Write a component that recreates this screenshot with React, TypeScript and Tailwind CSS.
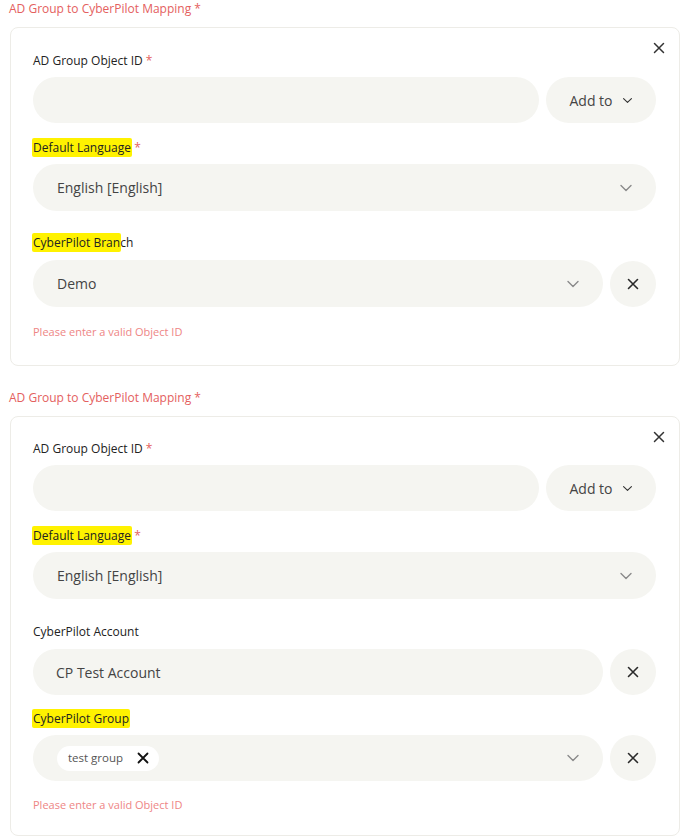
import React from 'react';

const font = { fontFamily: '"Open Sans", "Liberation Sans", sans-serif' };

const XIcon = ({ size = 12, stroke = 1.6, color = '#333' }: { size?: number; stroke?: number; color?: string }) => (
  <svg width={size} height={size} viewBox="0 0 12 12" fill="none">
    <path d="M1.5 1.5L10.5 10.5M10.5 1.5L1.5 10.5" stroke={color} strokeWidth={stroke} strokeLinecap="round" />
  </svg>
);

const Chevron = ({ size = 14, color = '#8a8a8a' }: { size?: number; color?: string }) => (
  <svg width={size} height={size} viewBox="0 0 14 14" fill="none">
    <path d="M2 4.5L7 9.5L12 4.5" stroke={color} strokeWidth={1.4} strokeLinecap="round" strokeLinejoin="round" />
  </svg>
);

const Hl = ({ children }: { children: React.ReactNode }) => (
  <span className="bg-[#fff200] rounded-[2px] -mx-[1px] px-[1px] py-[1px]">{children}</span>
);

const Label = ({ children, className = '' }: { children: React.ReactNode; className?: string }) => (
  <div className={`h-[14px] text-[12px] leading-[14px] text-[#222] ${className}`}>{children}</div>
);

const Req = () => <span className="text-[#e4605e]"> *</span>;

const SelectBox = ({ value, h = 'h-[47px]' }: { value?: React.ReactNode; h?: string }) => (
  <div className={`flex-1 ${h} rounded-full bg-[#f5f5f1] flex items-center pl-6 pr-[23px]`}>
    <div className="flex-1 text-[14px] text-[#444]">{value}</div>
    <Chevron />
  </div>
);

const ClearBtn = () => (
  <div className="w-[46px] h-[46px] rounded-full bg-[#f5f5f1] flex items-center justify-center shrink-0">
    <XIcon size={12} stroke={1.6} color="#2a2a2a" />
  </div>
);

const ObjectIdRow = () => (
  <div className="mt-[9px] h-[46px] flex gap-[7px]">
    <div className="flex-1 rounded-full bg-[#f5f5f1]" />
    <div className="w-[110px] rounded-full bg-[#f5f5f1] flex items-center justify-center gap-[9px] text-[14px] text-[#444]">
      <span>Add to</span>
      <Chevron size={11} color="#333" />
    </div>
  </div>
);

const Card = ({ children, className = '' }: { children: React.ReactNode; className?: string }) => (
  <div className={`relative border border-[#edece7] rounded-[8px] pl-[22px] pr-[23px] ${className}`}>
    <div className="absolute top-[14px] right-[14px]">
      <XIcon size={12} stroke={1.5} color="#333" />
    </div>
    {children}
  </div>
);

const Title = ({ className = '' }: { className?: string }) => (
  <div className={`h-[14px] text-[12px] leading-[14px] text-[#e4605e] ${className}`}>
    AD Group to CyberPilot Mapping *
  </div>
);

const ErrorText = ({ className = '' }: { className?: string }) => (
  <div className={`h-[14px] text-[11px] leading-[14px] text-[#ee8585] ${className}`}>Please enter a valid Object ID</div>
);

export default function App() {
  return (
    <div className="w-[688px] h-[840px] bg-white overflow-hidden pl-[9px] pr-[8px] pt-[2px]" style={font}>
      <Title />
      <Card className="mt-[11px] ml-[1px] pt-[26px] pb-[26px]">
        <Label>AD Group Object ID<Req /></Label>
        <ObjectIdRow />
        <Label className="mt-[18px]"><Hl>Default Language</Hl><Req /></Label>
        <div className="mt-[9px] flex">
          <SelectBox value="English [English]" />
        </div>
        <Label className="mt-[25px]"><Hl>CyberPilot Bran</Hl>ch</Label>
        <div className="mt-[10px] flex gap-[7px] items-center">
          <SelectBox value="Demo" />
          <ClearBtn />
        </div>
        <ErrorText className="mt-[18px]" />
      </Card>

      <Title className="mt-[25px]" />
      <Card className="mt-[11px] ml-[1px] pt-[25px] pb-[23px]">
        <Label>AD Group Object ID<Req /></Label>
        <ObjectIdRow />
        <Label className="mt-[18px]"><Hl>Default Language</Hl><Req /></Label>
        <div className="mt-[9px] flex">
          <SelectBox value="English [English]" />
        </div>
        <Label className="mt-[26px]">CyberPilot Account</Label>
        <div className="mt-[10px] flex gap-[7px] items-center">
          <div className="flex-1 h-[46px] rounded-full bg-[#f5f5f1] flex items-center pl-[23px] text-[14px] text-[#444]">
            CP Test Account
          </div>
          <ClearBtn />
        </div>
        <Label className="mt-[17px]"><Hl>CyberPilot Group</Hl></Label>
        <div className="mt-[9px] flex gap-[7px] items-center">
          <SelectBox
            h="h-[46px]"
            value={
              <span className="inline-flex items-center h-[25px] rounded-full bg-white pl-[11px] pr-[10px] gap-[14px] text-[11.5px] text-[#555]">
                test group
                <XIcon size={12} stroke={1.8} color="#111" />
              </span>
            }
          />
          <ClearBtn />
        </div>
        <ErrorText className="mt-[17px]" />
      </Card>
    </div>
  );
}
